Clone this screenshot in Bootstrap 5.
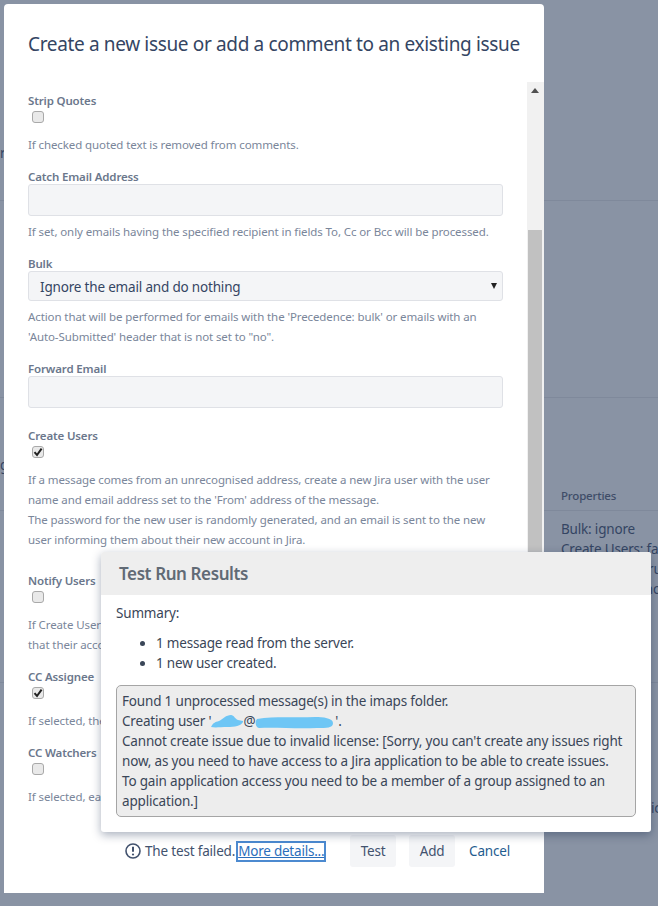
<!DOCTYPE html>
<html lang="en">
<head>
<meta charset="utf-8">
<title>Test Run Results</title>
<link href="https://cdn.jsdelivr.net/npm/bootstrap@5.3.0/dist/css/bootstrap.min.css" rel="stylesheet">
<style>
html,body{margin:0;height:906px;overflow:hidden}
body{position:relative;width:658px;background:#8993a4;font-family:"Noto Sans","Open Sans",sans-serif;color:#253858;font-size:13.5px;letter-spacing:-.18px}
.page-rule{position:absolute;left:0;right:0;height:1px;background:#7f899b}
.page-frag{position:absolute;color:#344563;line-height:20px;white-space:nowrap}
.page-head{font-size:11.5px;font-weight:500;color:#3f4d68}
.main-dialog{position:absolute;left:4px;top:4px;width:540px;height:889px;background:#fff;border-radius:4px 4px 0 0}
.dialog-title{font-size:19px;letter-spacing:-.35px;line-height:24px;font-weight:400;color:#344563;padding:28px 0 0 24px;margin:0;height:78px;white-space:nowrap}
.scroll-pane{height:735px;overflow:hidden;position:relative;padding:10px 0 0 24px}
.scroll-track{position:absolute;right:0;top:0;bottom:0;width:17px;background:#f1f1f1}
.scroll-thumb{position:absolute;left:1px;right:2px;top:148px;bottom:0;background:#c1c1c1}
.scroll-arrow{position:absolute;left:4px;top:6px;border:4px solid transparent;border-top:0;border-bottom:5px solid #505050}
.field-label{display:block;font-size:11.5px;letter-spacing:-.15px;line-height:16px;font-weight:600;color:#6b778c;padding-top:1px;margin-bottom:-1px}
.field-box{display:block;width:475px;height:32px;background:#f4f5f7;border:1px solid #dfe1e6;border-radius:3px;margin:0}
.field-select{height:30px;line-height:31px;padding:0 11px;color:#344563;position:relative}
.select-arrow{position:absolute;right:5px;top:11px;border:3.5px solid transparent;border-bottom:0;border-top:6px solid #222}
.tick-box{width:12px;height:12px;border:1px solid #a9a9a9;background:#e9e9e9;border-radius:3px;margin:3px 0 0 4px;display:flex;align-items:center;justify-content:center}
.help-text{font-size:11.5px;letter-spacing:-.1px;line-height:20px;color:#7a869a;width:475px;padding-top:1px;margin-bottom:-1px}
.gap-a{margin-top:11px}
.gap-b{margin-top:5px}
.gap-c{margin-top:14px}
.gap-d{margin-top:19px}
.gap-e{margin-top:23px}
.dialog-foot{height:76px;padding:18px 34px 0 121px}
.fail-note{color:#42526e;white-space:nowrap;height:32px}
.more-link{border:2px solid #4c8ad0;padding:0;margin-left:1px;line-height:17px;display:inline-block;color:#2a6ebb;text-decoration:underline;letter-spacing:-.22px}
.foot-btn{width:46px;height:32px;background:#f4f5f7;color:#42526e;font-size:13.5px;letter-spacing:-.18px;border:0;border-radius:3px;padding:0}
.foot-btn-b{margin-left:13px}
.foot-cancel{color:#1f5c8f;text-decoration:none;margin-left:14px;line-height:32px}
.results-dialog{position:absolute;left:101px;top:552px;width:550px;height:280px;background:#fff;border-radius:3px;box-shadow:0 3px 10px rgba(9,30,66,.35)}
.results-head{height:43px;background:#eeeeee;padding:0 18px;font-size:17px;letter-spacing:-.4px;font-weight:600;color:#616a75;line-height:44px;border-radius:3px 3px 0 0}
.results-body{padding:8px 15px 0;line-height:20px;color:#3a4658}
.results-body p{margin:0 0 10px}
.results-body ul{margin:0 0 12px;padding-left:40px}
.log-box{background:#ededed;border:1px solid #a5a5a5;border-radius:5px;padding:5px;width:520px;height:132px}
.scribble{display:inline-block;vertical-align:-3px}
</style>
</head>
<body>
<div class="page-rule" style="top:200px"></div>
<div class="page-rule" style="top:397px"></div>
<div class="page-rule" style="top:510px"></div>
<div class="page-rule" style="top:682px"></div>
<div class="page-frag" style="left:0;top:143px">r</div>
<div class="page-frag" style="left:0;top:455px">g</div>
<div class="page-frag page-head" style="left:561px;top:486px">Properties</div>
<div class="page-frag" style="left:561px;top:519px">Bulk: ignore</div>
<div class="page-frag" style="left:561px;top:539px">Create Users: false</div>
<div class="page-frag" style="left:561px;top:559px">Notify Users: true</div>
<div class="page-frag" style="left:561px;top:579px">Strip Quotes: no</div>
<div class="page-frag" style="left:651px;top:798px">ic</div>

<div class="main-dialog d-flex flex-column">
  <h2 class="dialog-title">Create a new issue or add a comment to an existing issue</h2>
  <div class="scroll-pane">
    <label class="field-label">Strip Quotes</label>
    <div class="tick-box"></div>
    <p class="help-text gap-a">If checked quoted text is removed from comments.</p>
    <label class="field-label gap-c">Catch Email Address</label>
    <div class="field-box"></div>
    <p class="help-text gap-b">If set, only emails having the specified recipient in fields To, Cc or Bcc will be processed.</p>
    <label class="field-label gap-c">Bulk</label>
    <div class="field-box field-select">Ignore the email and do nothing<span class="select-arrow"></span></div>
    <p class="help-text gap-b">Action that will be performed for emails with the 'Precedence: bulk' or emails with an<br>'Auto-Submitted' header that is not set to "no".</p>
    <label class="field-label gap-c">Forward Email</label>
    <div class="field-box"></div>
    <label class="field-label gap-d">Create Users</label>
    <div class="tick-box"><svg width="10" height="10" viewBox="0 0 10 10"><path d="M1.5 5.2 4 8 8.6 1.6" fill="none" stroke="#222" stroke-width="2"/></svg></div>
    <p class="help-text gap-a">If a message comes from an unrecognised address, create a new Jira user with the user<br>name and email address set to the 'From' address of the message.<br>The password for the new user is randomly generated, and an email is sent to the new<br>user informing them about their new account in Jira.</p>
    <label class="field-label gap-e">Notify Users</label>
    <div class="tick-box"></div>
    <p class="help-text gap-a">If Create Users is selected, an email will be sent to new users<br>that their account has been created.</p>
    <label class="field-label gap-c">CC Assignee</label>
    <div class="tick-box"><svg width="10" height="10" viewBox="0 0 10 10"><path d="M1.5 5.2 4 8 8.6 1.6" fill="none" stroke="#222" stroke-width="2"/></svg></div>
    <p class="help-text gap-a">If selected, the assignee will be copied.</p>
    <label class="field-label gap-c">CC Watchers</label>
    <div class="tick-box"></div>
    <p class="help-text gap-a">If selected, each watcher will be copied.</p>
    <div class="scroll-track"><span class="scroll-arrow"></span><div class="scroll-thumb"></div></div>
  </div>
  <div class="dialog-foot d-flex align-items-start">
    <div class="fail-note d-flex align-items-center">
      <svg width="16" height="16" viewBox="0 0 16 16" class="me-1"><circle cx="8" cy="8" r="7" fill="none" stroke="#42526e" stroke-width="1.6"/><path d="M8 3.8v5" stroke="#42526e" stroke-width="2"/><circle cx="8" cy="11.5" r="1.1" fill="#42526e"/></svg>
      <span>The test failed.</span><a class="more-link" href="#">More details...</a>
    </div>
    <button class="btn foot-btn ms-auto" type="button">Test</button>
    <button class="btn foot-btn foot-btn-b" type="button">Add</button>
    <a class="foot-cancel" href="#">Cancel</a>
  </div>
</div>

<div class="results-dialog">
  <div class="results-head">Test Run Results</div>
  <div class="results-body">
    <p>Summary:</p>
    <ul>
      <li>1 message read from the server.</li>
      <li>1 new user created.</li>
    </ul>
    <div class="log-box">Found 1 unprocessed message(s) in the imaps folder.<br>Creating user '<svg class="scribble" width="32" height="15" viewBox="0 0 32 15"><path d="M0 13C2 9 4 8 8 7c4-2 7-6 12-6 3 0 4 4 7 5l5 1v1c-2 4-8 5-16 5-6 0-12 1-16 0z" fill="#6ec6f5"/></svg>@<svg class="scribble" width="80" height="14" viewBox="0 0 80 14"><path d="M2 4C20 1 40 3 60 2c8 0 18 1 18 6s-6 5-16 5C40 14 20 12 4 13 0 12 0 6 2 4z" fill="#6ec6f5"/></svg>'.<br>Cannot create issue due to invalid license: [Sorry, you can't create any issues right<br>now, as you need to have access to a Jira application to be able to create issues.<br>To gain application access you need to be a member of a group assigned to an<br>application.]</div>
  </div>
</div>
<script src="https://cdn.jsdelivr.net/npm/bootstrap@5.3.0/dist/js/bootstrap.bundle.min.js"></script>
</body>
</html>
